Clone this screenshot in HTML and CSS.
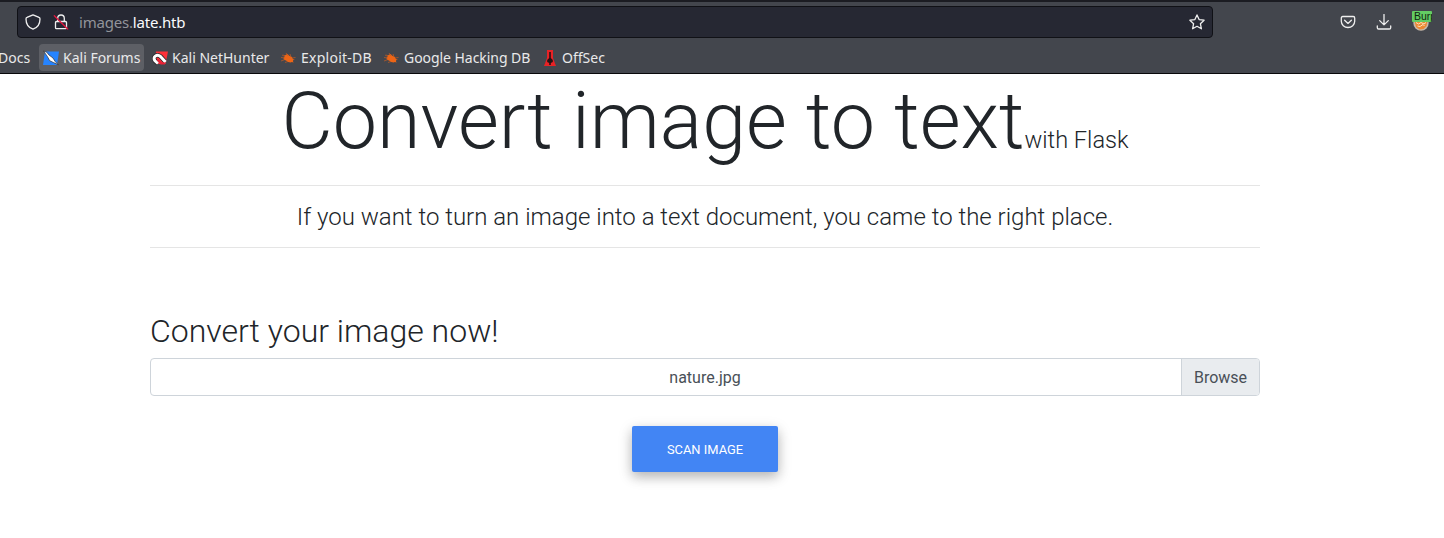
FILE: index.html
```html
<!DOCTYPE html>
<html lang="en">
<head>
<meta charset="utf-8">
<title>Image Reader</title>
<link rel="stylesheet" href="styles.css">
</head>
<body>
<svg width="0" height="0" class="defs"><defs>
<symbol id="bug" viewBox="0 0 16 16"><path fill="#ed6516" d="M3 4.500 5 5.200 7.500 4l1.800 1.700 2.500 1.200L13 9l2 .5-1.600.3-.5 1.500.8 1.200-1.900-.6-1 .5-2.800-.4-2-1.400L4 9.700 3.500 8 5 6z"/><path fill="none" stroke="#c45b21" stroke-width=".7" d="M1 7.500 5 8M1 11l4-1.500M5 12.500l3-1M2 5l3 1.500M6 3l2 3M10 4l1 3M12 8l3.500-.5"/></symbol>
</defs></svg>
<header class="browser">
  <div class="toolbar">
    <div class="urlbar">
      <svg class="icon shield" viewBox="0 0 16 16"><path d="M8 .9 14 3.400c.8.300 1 .8 1 1.500 0 5-2.400 8.600-7 10.300C3.400 13.500 1 9.900 1 4.900c0-.7.2-1.200 1-1.500z"/></svg>
      <svg class="icon lock" viewBox="0 0 16 16"><path d="M4.700 7.500V4.300a3.300 3.300 0 0 1 6.600 0v3.200M3.500 7.500h9a1 1 0 0 1 1 1v5.200a1 1 0 0 1-1 1h-9a1 1 0 0 1-1-1V8.500a1 1 0 0 1 1-1z"/><path class="slash" d="M1.300 1.700 14.700 15"/></svg>
      <span class="url">images.<b>late.htb</b></span>
      <svg class="icon star" viewBox="0 0 16 16"><path d="m8 .9 2.100 4.700 5 .6-3.700 3.500 1 5.100L8 12.300l-4.400 2.500 1-5.100L.9 6.200l5-.6z"/></svg>
    </div>
    <div class="actions">
      <svg class="icon" viewBox="0 0 16 16"><path d="M2.800 2.500h10.400c1 0 1.500.5 1.500 1.500v3.300a6.700 6.200 0 0 1-13.400 0V4c0-1 .5-1.500 1.500-1.500zM4.600 6.300 8 9.400l3.400-3.100"/></svg>
      <svg class="icon" viewBox="0 0 16 16"><path d="M8 .5v10.300M3.700 6.600 8 10.900l4.300-4.300M1.300 12v1.700c0 .9.400 1.300 1.300 1.300h10.800c.9 0 1.300-.4 1.300-1.300V12"/></svg>
      <div class="proxy">
        <svg viewBox="0 0 16 16"><circle cx="8" cy="8" r="7.700" fill="#c6b8aa"/><path fill="#ed8932" d="M1.500 6h13l-1 5-3 3-4 .5L3 12z"/><path d="M3 7.500 5.500 9 8 7.500 11 9l2-1.500M4.500 11l2.500.5 3-2 1.500 1.500" fill="none" stroke="#fde2c1" stroke-width="1"/></svg>
        <span class="badge">Burp</span>
      </div>
    </div>
  </div>
  <nav class="bookmarks">
    <a class="docs">Docs</a>
    <a class="forums"><svg viewBox="0 0 16 16"><path fill="#2684ff" d="M2 1.500h14L14 15H0z"/><path fill="#fff" stroke="#302f32" stroke-width=".7" d="m.5 1 3.200 1.200L6 5l4 3 2.200 3.500 3.200 3.300-5-2.300-3.700-1.800-2.200-4z"/></svg><span>Kali Forums</span></a>
    <a class="hunter"><svg viewBox="0 0 16 16"><path fill="#ff3038" d="M4 1.500h12L13.500 14H3z"/><path fill="none" stroke="#2c292c" stroke-width="4.600" d="M13 11.500 8.500 6.500C5 3.500 0 7 3 10.800L6 13.500"/><path fill="none" stroke="#fff" stroke-width="3" d="M13.500 12 8.500 6.500C5 3.500 0 7 3 10.800L6 13.500"/><path fill="none" stroke="#e81f35" stroke-width="2" d="m5.500 9.500 3.500 4h4"/></svg><span>Kali NetHunter</span></a>
    <a class="exploit"><svg><use href="#bug"/></svg><span>Exploit-DB</span></a>
    <a class="google"><svg><use href="#bug"/></svg><span>Google Hacking DB</span></a>
    <a class="offsec"><svg viewBox="0 0 16 16"><path fill="#e72225" d="M5 0h6v8l3 8H2l3-8z"/><path fill="#231315" d="M7.200 2h1.600v6l2 2v2l-2 1v2H7.200v-2l-2-1v-2l2-2z"/></svg><span>OffSec</span></a>
  </nav>
</header>
<main class="container">
  <h1>Convert image to text<small>with Flask</small></h1>
  <hr>
  <p class="lead">If you want to turn an image into a text document, you came to the right place.</p>
  <hr>
  <h2>Convert your image now!</h2>
  <label class="file"><span class="filename">nature.jpg</span><span class="browse">Browse</span></label>
  <button class="scan">SCAN IMAGE</button>
</main>
</body>
</html>
```

FILE: styles.css
```css
* { box-sizing: border-box; }
body { margin: 0; min-height: 100vh; background: #fff; color: #212529; font-family: Roboto, sans-serif; font-weight: 300; }
.defs { display: block; }
.browser { height: 74px; background: #43464d; border-top: 2px solid #1b1c22; border-bottom: 1px solid #08080a; color: #e9e9ea; font-family: "Noto Sans", sans-serif; font-weight: 400; font-size: 14px; }
.toolbar { display: flex; justify-content: space-between; padding: 4px 12px 0 17px; height: 37px; }
.urlbar { display: flex; align-items: center; width: 1196px; height: 32px; padding: 0 7px; background: #262833; border: 1px solid #101116; border-radius: 4px; }
.icon { width: 16px; height: 16px; flex: none; fill: none; stroke: #efefef; stroke-width: 1.3; stroke-linejoin: round; stroke-linecap: round; }
.lock { margin-left: 12px; }
.icon .slash { stroke: #e5163f; }
.url { margin-left: 10px; color: #92949a; font-size: 15px; line-height: 20px; letter-spacing: -.2px; }
.url b { font-weight: 400; color: #fbfbfe; }
.star { margin-left: auto; }
.actions { display: flex; align-items: center; gap: 20px; height: 32px; }
.proxy { position: relative; width: 20px; height: 20px; }
.proxy svg { width: 16px; height: 16px; display: block; margin: 3px 0 0 1px; }
.badge { position: absolute; left: 0; top: -1px; width: 20px; height: 11px; overflow: hidden; background: #63cd63; border-radius: 1px; color: #102610; font: 10.5px/11px "Liberation Sans", sans-serif; padding-left: 2px; }
.bookmarks { display: flex; height: 31px; padding-top: 5px; line-height: 27px; white-space: nowrap; }
.bookmarks a { display: flex; align-items: center; height: 27px; }
.bookmarks svg { width: 16px; height: 16px; margin-right: 4px; flex: none; }
.bookmarks span { letter-spacing: 0; }
.bookmarks .docs { width: 41px; margin-left: -2px; }
.bookmarks .forums { width: 105px; padding-left: 4px; background: #5d5f65; border-radius: 4px; }
.bookmarks .hunter { width: 136px; padding-left: 8px; }
.bookmarks .exploit { width: 103px; }
.bookmarks .exploit svg, .bookmarks .google svg { margin-right: 5px; }
.bookmarks .exploit span { letter-spacing: .25px; }
.bookmarks .google { width: 159px; }
.bookmarks .google span { letter-spacing: -.05px; }
.container { width: 1110px; margin-left: 150px; text-align: center; }
h1 { margin: 0; height: 111px; font-size: 79px; line-height: 94px; font-weight: 300; white-space: nowrap; }
small { font-size: 23.6px; }
hr { margin: 0; height: 1px; border: 0; background: #e5e5e5; }
.lead { margin: 0; height: 61px; font-size: 24px; line-height: 62px; }
h2 { margin: 64px 0 8px; text-align: left; font-size: 32px; line-height: 38px; font-weight: 300; }
.file { display: flex; height: 38px; border: 1px solid #ced4da; border-radius: 4px; color: #495057; font-size: 16px; font-weight: 400; line-height: 38px; overflow: hidden; }
.filename { flex: 1; padding-left: 78px; }
.browse { width: 78px; background: #e9ecef; border-left: 1px solid #ced4da; }
.scan { display: block; width: 146px; height: 46px; margin: 30px auto 0; padding: 0; border: 0; border-radius: 2px; background: #4285f4; color: #fff; font: 400 12.9px Roboto, sans-serif; box-shadow: 0 5px 11px 0 rgba(0,0,0,.18), 0 4px 15px 0 rgba(0,0,0,.15); }
```
